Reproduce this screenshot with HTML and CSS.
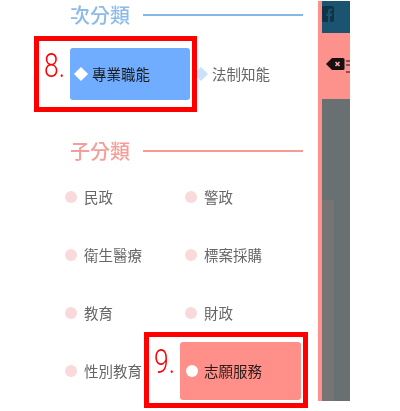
FILE: index.html
```html
<!DOCTYPE html>
<html lang="zh-Hant">
<head>
  <meta charset="UTF-8">
  <title>分類</title>
  <meta name="viewport" content="width=device-width, initial-scale=1.0">
  <link rel="stylesheet" href="styles.css">
</head>
<body>
  <div class="page">
    <div class="panel">
      <div class="section-title blue">
        <h2>次分類</h2>
        <span class="rule"></span>
      </div>
      <div class="sub-row">
        <div class="sub-item selected">
          <span class="diamond"></span>
          <span class="label">專業職能</span>
        </div>
        <div class="sub-item">
          <span class="diamond"></span>
          <span class="label">法制知能</span>
        </div>
      </div>

      <div class="section-title red">
        <h2>子分類</h2>
        <span class="rule"></span>
      </div>
      <div class="child-grid">
        <div class="child-item"><span class="dot"></span><span class="label">民政</span></div>
        <div class="child-item"><span class="dot"></span><span class="label">警政</span></div>
        <div class="child-item"><span class="dot"></span><span class="label">衛生醫療</span></div>
        <div class="child-item"><span class="dot"></span><span class="label">標案採購</span></div>
        <div class="child-item"><span class="dot"></span><span class="label">教育</span></div>
        <div class="child-item"><span class="dot"></span><span class="label">財政</span></div>
        <div class="child-item"><span class="dot"></span><span class="label">性別教育</span></div>
        <div class="child-item selected"><span class="dot"></span><span class="label">志願服務</span></div>
      </div>
    </div>

    <div class="strip">
      <div class="strip-top">
        <svg class="fb-icon" viewBox="0 0 14 16" width="12" height="16" preserveAspectRatio="none">
          <path d="M2 0h10a2 2 0 0 1 2 2v12a2 2 0 0 1-2 2H9.500V10h2l.4-2.500H9.500V6c0-.8.3-1.200 1.200-1.200H12V2.600h-1.900C8 2.600 7 3.800 7 5.700v1.800H5V10h2v6H2a2 2 0 0 1-2-2V2a2 2 0 0 1 2-2z" fill="#123347"/>
        </svg>
      </div>
      <div class="strip-mid">
        <svg class="tag-icon" viewBox="0 0 26 16" width="26" height="16">
          <path d="M6 1h11a1.500 1.500 0 0 1 1.500 1.500v9A1.500 1.500 0 0 1 17 13H6L0 7z" fill="#1a0f10"/>
          <path d="M9.500 5l4 4M13.500 5l-4 4" stroke="#ffb5b0" stroke-width="1.500"/>
          <path d="M20 4h6M20 8h6M20 15h6" stroke="#1a0f10" stroke-width="1"/>
        </svg>
      </div>
      <div class="strip-bottom">
        <div class="strip-upper"></div>
        <div class="strip-lower"><span class="strip-band"></span></div>
      </div>
    </div>
  </div>

  <div class="callout callout-8"><span class="callout-num">8.</span></div>
  <div class="callout callout-9"><span class="callout-num">9.</span></div>
</body>
</html>
```

FILE: styles.css
```css
* {
  box-sizing: border-box;
  margin: 0;
  padding: 0;
}

body {
  background: #ffffff;
  font-family: "Noto Sans CJK TC", "Noto Sans", sans-serif;
  width: 400px;
  height: 411px;
  overflow: hidden;
  position: relative;
}

.page {
  display: flex;
  align-items: flex-start;
  padding-top: 1px;
  filter: blur(0.4px);
}

.panel {
  width: 318px;
  padding: 3px 15px 0 70px;
}

.section-title {
  display: flex;
  align-items: center;
  gap: 13px;
  height: 22px;
}

.section-title h2 {
  font-size: 20px;
  font-weight: 500;
  line-height: 22px;
  white-space: nowrap;
}

.section-title .rule {
  flex: 1;
  height: 2px;
}

.section-title.blue h2 { color: #8dbbe9; }
.section-title.blue .rule { background: #86b6e6; }
.section-title.red h2 { color: #f59d98; }
.section-title.red .rule { background: #f79a94; }

.label {
  margin-bottom: 2px;
}

.sub-row {
  display: flex;
  height: 52px;
  margin: 22px 0 40px;
}

.sub-item {
  width: 120px;
  display: flex;
  align-items: center;
  gap: 5px;
  padding-left: 5px;
  font-size: 14.5px;
  color: #666666;
  border-radius: 3px;
}

.sub-item + .sub-item {
  width: auto;
}

.diamond {
  width: 10px;
  height: 10px;
  margin: 0 1px;
  background: #c9e2fb;
  transform: rotate(45deg);
}

.sub-item.selected {
  background: #70acff;
  color: #1c1c1c;
}

.sub-item.selected .diamond {
  background: #ffffff;
}

.child-grid {
  display: grid;
  grid-template-columns: 110px 121px;
  grid-auto-rows: 58px;
  margin-top: 6px;
}

.child-item {
  display: flex;
  align-items: center;
  gap: 7px;
  font-size: 14.5px;
  color: #666666;
  border-radius: 3px;
  white-space: nowrap;
  margin-left: -5px;
}

.child-item:nth-child(even) {
  margin-left: 5px;
}

.dot {
  width: 12px;
  height: 12px;
  border-radius: 50%;
  background: #f9d9d9;
  flex-shrink: 0;
}

.child-item.selected {
  background: #ff8f88;
  color: #2a1c1c;
  padding-left: 6px;
  margin-left: 0;
  gap: 6px;
}

.child-item.selected .dot {
  background: #ffffff;
}

.strip {
  width: 32px;
  height: 400px;
  padding-left: 4px;
  background: #fd918b;
  display: flex;
  flex-direction: column;
}

.strip-top {
  height: 32px;
  background: #1a5470;
  overflow: hidden;
  padding-top: 5px;
}

.fb-icon {
  display: block;
}

.strip-mid {
  height: 66px;
  padding-top: 24px;
  overflow: hidden;
  margin-left: -4px;
}

.tag-icon {
  display: block;
  margin-left: 8px;
}

.strip-bottom {
  flex: 1;
  display: flex;
  flex-direction: column;
  background: #687071;
}

.strip-upper {
  height: 101px;
}

.strip-lower {
  flex: 1;
}

.strip-band {
  display: block;
  width: 12px;
  height: 100%;
  background: #767574;
}

.callout {
  position: absolute;
  height: 76px;
  border: 5px solid #ff0000;
  filter: blur(0.3px);
}

.callout-8 {
  left: 34px;
  top: 36px;
  width: 163px;
}

.callout-9 {
  left: 144px;
  top: 332px;
  width: 164px;
}

.callout-num {
  position: absolute;
  left: 5px;
  top: 7px;
  font-family: Roboto, sans-serif;
  font-weight: 300;
  font-size: 33px;
  line-height: 36px;
  color: #ff0000;
  transform: scaleX(0.8);
  transform-origin: left center;
}
```
